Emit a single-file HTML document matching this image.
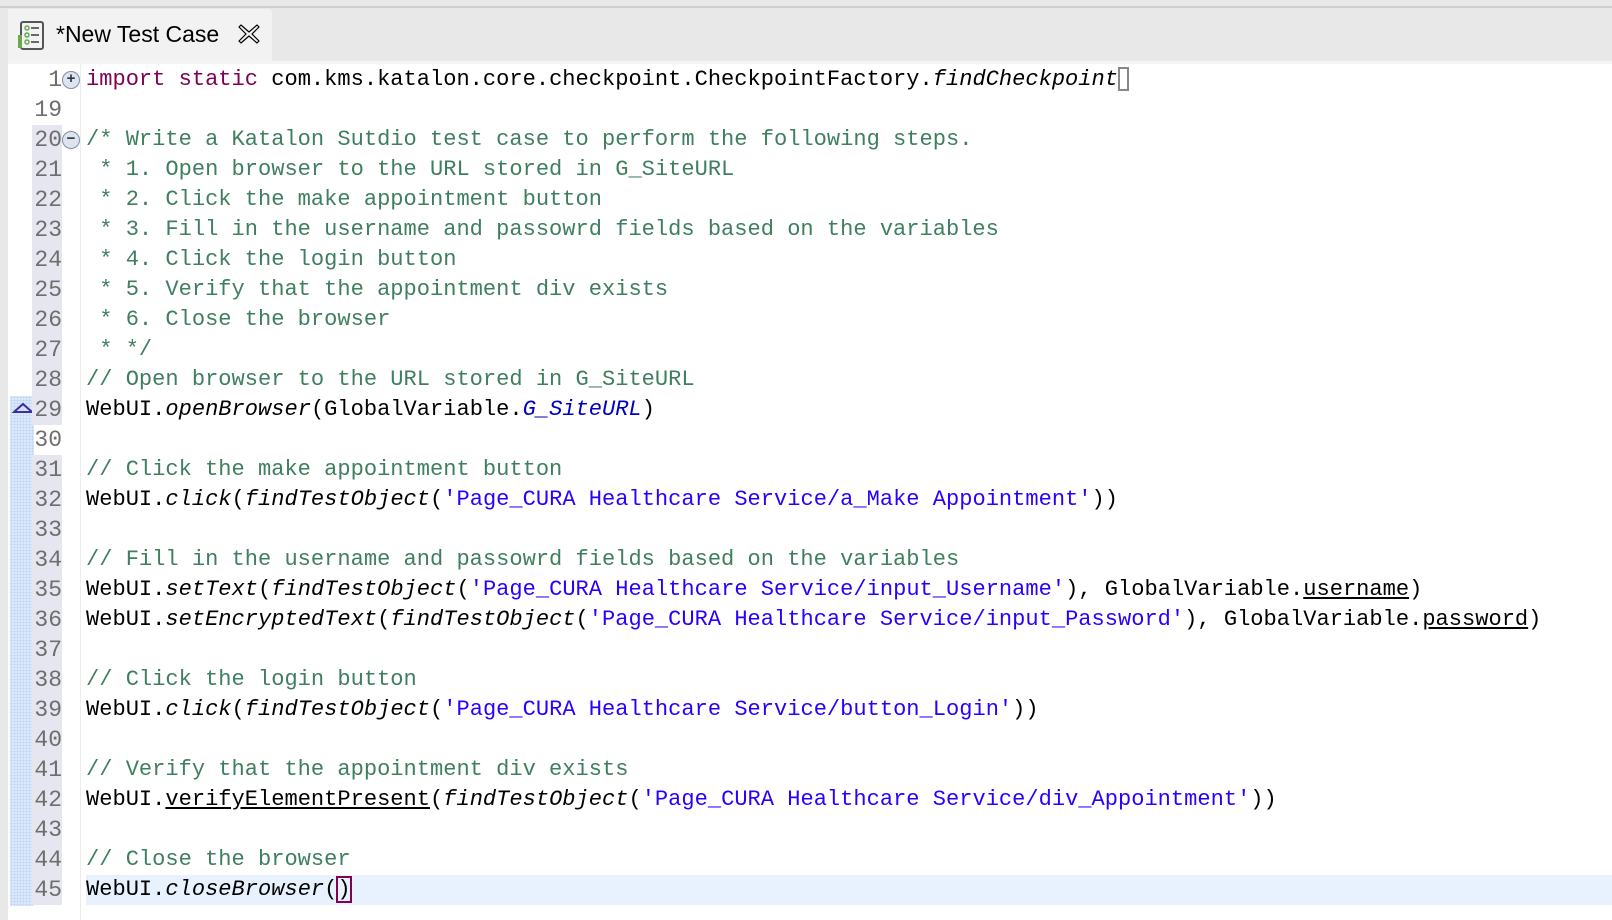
<!DOCTYPE html>
<html><head><meta charset="utf-8"><style>
*{margin:0;padding:0;box-sizing:border-box}
body{width:1612px;height:920px;overflow:hidden;background:#e8e8e8;position:relative;font-family:"Liberation Mono",monospace}
.topline{position:absolute;left:0;top:6px;width:1612px;height:2px;background:#cfcfcf}
.tab{position:absolute;left:8px;top:9px;width:264px;height:52px;background:#f2f2f2;border-top-right-radius:4px}
.tab .t{position:absolute;left:48px;top:12px;font:23px "Liberation Sans",sans-serif;color:#000}
.ed{position:absolute;left:8px;top:61px;width:1604px;height:859px;background:#fff;border-top:3px solid #f4f4f4}
.ruler{position:absolute;left:10px;top:396px;width:24px;height:510px;background-color:#dbe9fb;background-image:radial-gradient(#bcd4f5 40%,transparent 41%);background-size:3px 3px}
.sep{position:absolute;left:80px;top:64px;width:1px;height:856px;background:#ececec}
.row{position:absolute;left:0;width:1612px;height:30px;line-height:30px;font-size:22.05px;white-space:pre}
.num{position:absolute;left:32px;width:30px;text-align:right;color:#6e6e6e;height:30px;font-size:23px}
.num.h{background:#e6e6f0}
.code{position:absolute;left:86px;color:#000}
.k{color:#7f0055}.c{color:#3f7f5f}.s{color:#2a00ff}.f{color:#0000c0;font-style:italic}.i{font-style:italic}.u{text-decoration:underline}
.cur{background:#e8f2fe}
.fold{position:absolute;left:62px;width:18px;height:18px;border:1.5px solid #7d8fa8;border-radius:50%;background:#dde4ee;font:bold 15px/14px "Liberation Sans";text-align:center;color:#334}
</style></head><body>
<div class="topline"></div>
<div class="tab">
<svg style="position:absolute;left:10px;top:12px" width="28" height="30" viewBox="0 0 28 30"><rect x="3" y="1" width="22" height="27" rx="2" fill="none" stroke="#555" stroke-width="2"/><rect x="0" y="14" width="4" height="13" fill="#6aa84f"/><circle cx="9" cy="7" r="2" fill="none" stroke="#6aa84f" stroke-width="1.5"/><circle cx="9" cy="14" r="2" fill="none" stroke="#6aa84f" stroke-width="1.5"/><circle cx="9" cy="21" r="2" fill="none" stroke="#6aa84f" stroke-width="1.5"/><path d="M13 7h8M13 14h8M13 21h8" stroke="#555" stroke-width="1.8"/></svg>
<div class="t">*New Test Case</div>
<svg style="position:absolute;left:230px;top:14px" width="22" height="22" viewBox="0 0 22 22"><path d="M3 2l8 7 8-7 2 2-7 7 7 7-2 2-8-7-8 7-2-2 7-7-7-7z" fill="none" stroke="#000" stroke-width="1.2" stroke-linejoin="round"/></svg>
</div>
<div class="ed"></div>
<div class="ruler"></div>
<div class="sep"></div>
<svg style="position:absolute;left:12px;top:402px" width="22" height="12"><path d="M2 10L11 2L20 10Z" fill="none" stroke="#3b2fa0" stroke-width="2"/></svg>
<div class="row" style="top:65px"><span class="num">1</span><span class="code"><span class="k">import static</span> com.kms.katalon.core.checkpoint.CheckpointFactory.<span class="i">findCheckpoint</span><span style="display:inline-block;width:11px;height:24px;border:2px solid #888;vertical-align:middle"></span></span></div>
<div class="fold" style="top:71px">+</div>
<div class="row" style="top:95px"><span class="num">19</span></div>
<div class="row" style="top:125px"><span class="num h">20</span><span class="code c">/* Write a Katalon Sutdio test case to perform the following steps.</span></div>
<div class="fold" style="top:131px">−</div>
<div class="row" style="top:155px"><span class="num h">21</span><span class="code c"> * 1. Open browser to the URL stored in G_SiteURL</span></div>
<div class="row" style="top:185px"><span class="num h">22</span><span class="code c"> * 2. Click the make appointment button</span></div>
<div class="row" style="top:215px"><span class="num h">23</span><span class="code c"> * 3. Fill in the username and passowrd fields based on the variables</span></div>
<div class="row" style="top:245px"><span class="num h">24</span><span class="code c"> * 4. Click the login button</span></div>
<div class="row" style="top:275px"><span class="num h">25</span><span class="code c"> * 5. Verify that the appointment div exists</span></div>
<div class="row" style="top:305px"><span class="num h">26</span><span class="code c"> * 6. Close the browser</span></div>
<div class="row" style="top:335px"><span class="num h">27</span><span class="code c"> * */</span></div>
<div class="row" style="top:365px"><span class="num h">28</span><span class="code c">// Open browser to the URL stored in G_SiteURL</span></div>
<div class="row" style="top:395px"><span class="num h">29</span><span class="code">WebUI.<span class="i">openBrowser</span>(GlobalVariable.<span class="f">G_SiteURL</span>)</span></div>
<div class="row" style="top:425px"><span class="num">30</span></div>
<div class="row" style="top:455px"><span class="num h">31</span><span class="code c">// Click the make appointment button</span></div>
<div class="row" style="top:485px"><span class="num h">32</span><span class="code">WebUI.<span class="i">click</span>(<span class="i">findTestObject</span>(<span class="s">'Page_CURA Healthcare Service/a_Make Appointment'</span>))</span></div>
<div class="row" style="top:515px"><span class="num h">33</span></div>
<div class="row" style="top:545px"><span class="num h">34</span><span class="code c">// Fill in the username and passowrd fields based on the variables</span></div>
<div class="row" style="top:575px"><span class="num h">35</span><span class="code">WebUI.<span class="i">setText</span>(<span class="i">findTestObject</span>(<span class="s">'Page_CURA Healthcare Service/input_Username'</span>), GlobalVariable.<span class="u">username</span>)</span></div>
<div class="row" style="top:605px"><span class="num h">36</span><span class="code">WebUI.<span class="i">setEncryptedText</span>(<span class="i">findTestObject</span>(<span class="s">'Page_CURA Healthcare Service/input_Password'</span>), GlobalVariable.<span class="u">password</span>)</span></div>
<div class="row" style="top:635px"><span class="num h">37</span></div>
<div class="row" style="top:665px"><span class="num h">38</span><span class="code c">// Click the login button</span></div>
<div class="row" style="top:695px"><span class="num h">39</span><span class="code">WebUI.<span class="i">click</span>(<span class="i">findTestObject</span>(<span class="s">'Page_CURA Healthcare Service/button_Login'</span>))</span></div>
<div class="row" style="top:725px"><span class="num h">40</span></div>
<div class="row" style="top:755px"><span class="num h">41</span><span class="code c">// Verify that the appointment div exists</span></div>
<div class="row" style="top:785px"><span class="num h">42</span><span class="code">WebUI.<span class="u">verifyElementPresent</span>(<span class="i">findTestObject</span>(<span class="s">'Page_CURA Healthcare Service/div_Appointment'</span>))</span></div>
<div class="row" style="top:815px"><span class="num h">43</span></div>
<div class="row" style="top:845px"><span class="num h">44</span><span class="code c">// Close the browser</span></div>
<div class="row" style="top:875px"><div class="cur" style="position:absolute;left:86px;top:0;width:1526px;height:30px"></div><span class="num h">45</span><span class="code">WebUI.<span class="i">closeBrowser</span>(<span style="outline:2px solid #7f0055;outline-offset:-1px">)</span></span></div>
</body></html>
